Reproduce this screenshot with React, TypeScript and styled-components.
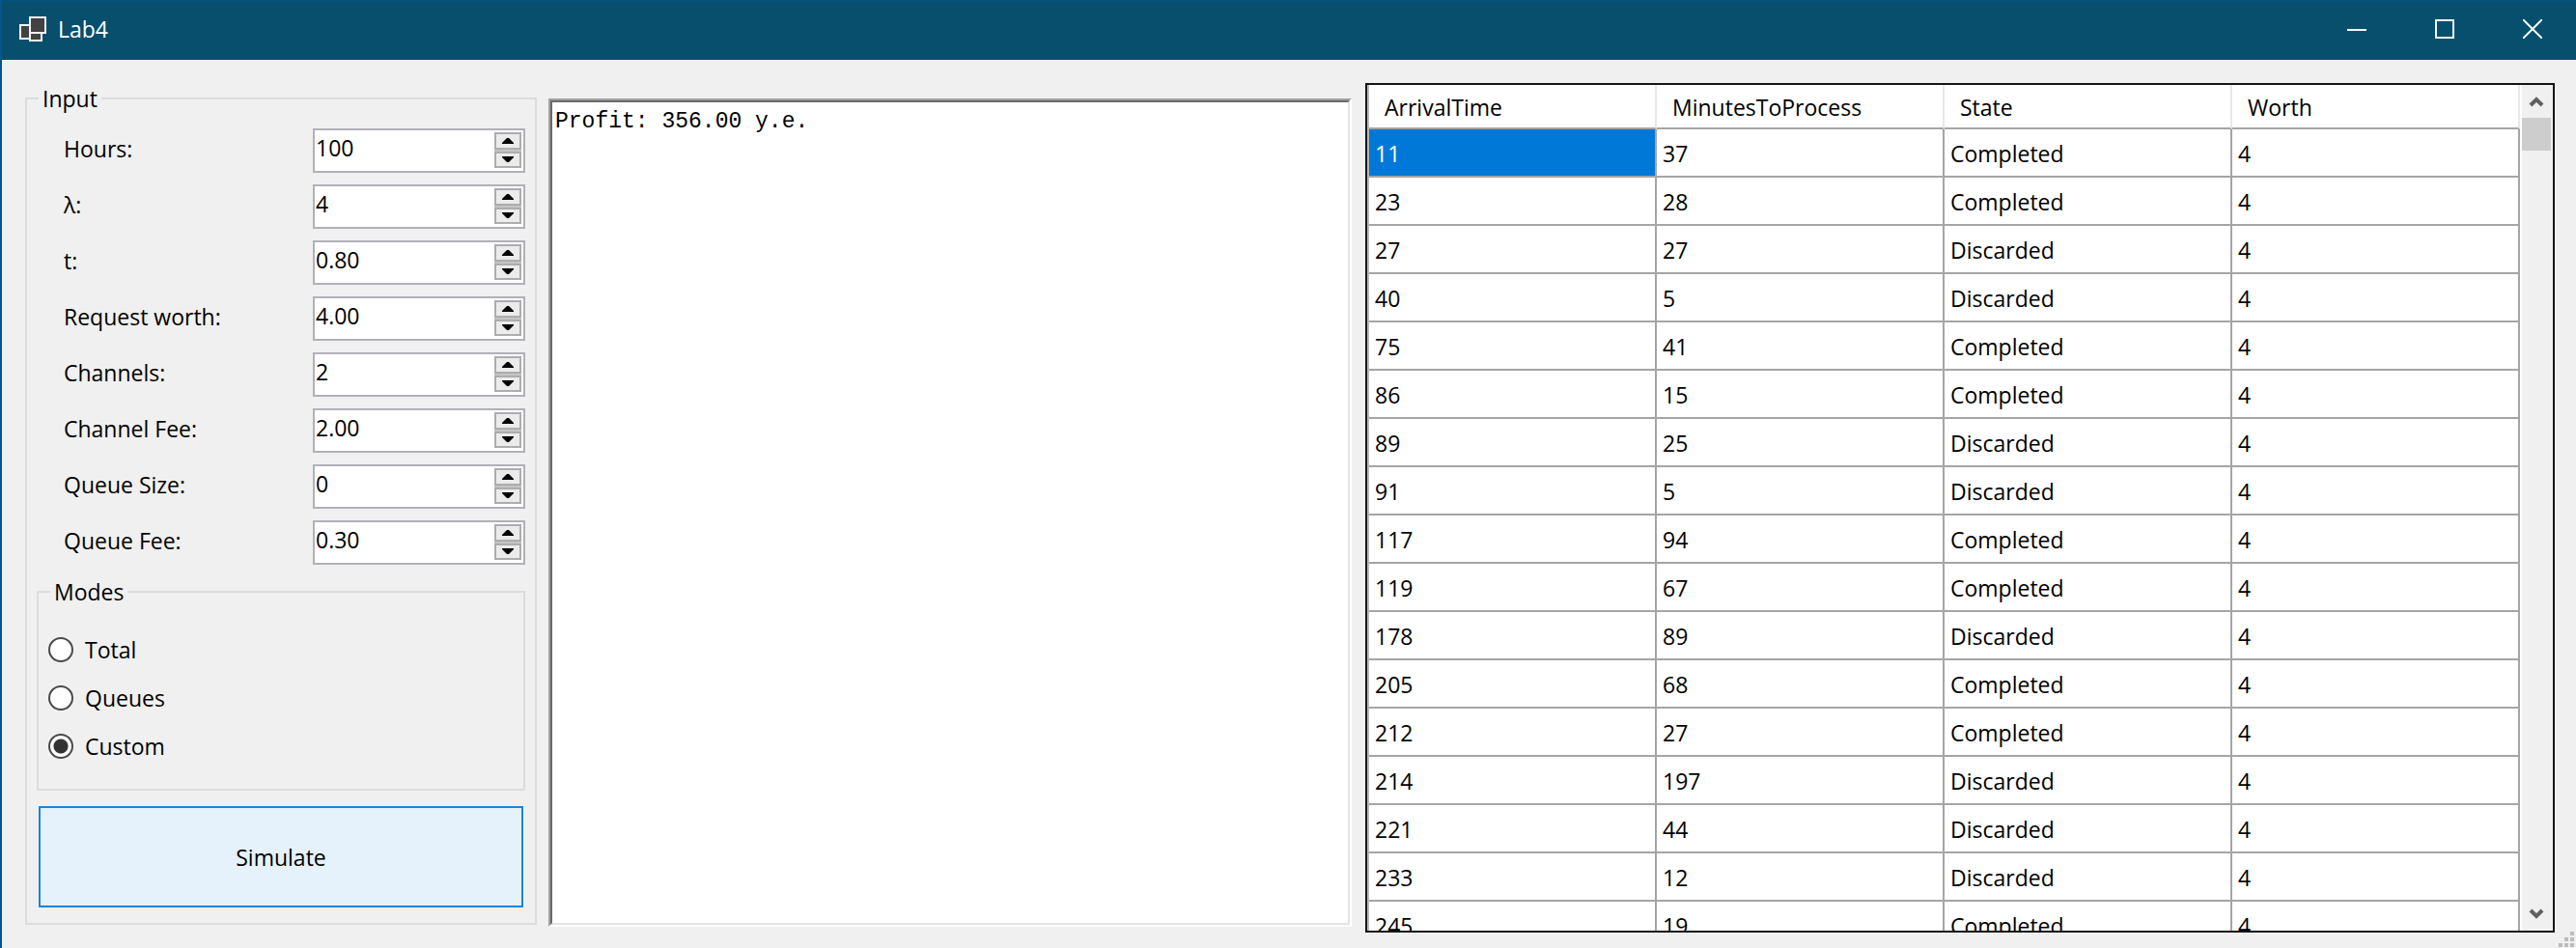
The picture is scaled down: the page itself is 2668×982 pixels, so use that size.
import React, { useState } from "react";
import styled, { createGlobalStyle } from "styled-components";

const GlobalStyle = createGlobalStyle`
  *, *::before, *::after { box-sizing: border-box; }
  html, body, #root { height: 100%; margin: 0; }
  body { background: #f0f0f0; }
  body, button, input, textarea {
    font-family: "Open Sans", "Noto Sans", sans-serif;
    font-size: 23px;
    line-height: 32px;
    color: #000;
  }
`;

const Window = styled.div`
  position: relative;
  display: flex;
  flex-direction: column;
  height: 100%;
  min-height: 720px;
  overflow: hidden;
  background: #f0f0f0;
  border-left: 2px solid #04568a;
`;

const TitleBar = styled.header`
  display: flex;
  flex: none;
  align-items: stretch;
  height: 62px;
  padding: 0 0 4px 18px;
  background: #074f6d;
  border-top: 2px solid #04517b;
  color: #fff;
`;

const AppIcon = styled.svg`
  align-self: center;
  width: 28px;
  height: 28px;
  margin-right: 12px;
`;

const Title = styled.h1`
  flex: 1;
  align-self: center;
  margin: 0;
  font-size: 23px;
  font-weight: 400;
`;

const CaptionButton = styled.button`
  display: flex;
  align-items: center;
  justify-content: center;
  width: 91px;
  padding: 0;
  border: 0;
  background: none;
  color: #f4f8fa;
`;

const Content = styled.main`
  display: grid;
  grid-template-columns: 530px minmax(0, 858fr) minmax(0, 1232fr);
  flex: 1;
  min-height: 0;
  padding: 24px 22px 16px 24px;
`;

const Group = styled.fieldset`
  display: flex;
  flex-direction: column;
  min-width: 0;
  margin: 0;
  border: 2px solid #dcdcdc;
`;

const InputGroup = styled(Group)`
  padding: 15px 10px 16px;
  margin-bottom: 8px;
`;

const ModesGroup = styled(Group)`
  gap: 18px;
  height: 222px;
  padding: 28px 10px 0;
`;

const Legend = styled.legend`
  margin-left: 2px;
  padding: 0 4px;
`;

const Fields = styled.div`
  display: flex;
  flex-direction: column;
  gap: 12px;
  margin-bottom: 12px;
`;

const Field = styled.div`
  display: grid;
  grid-template-columns: 258px minmax(0, 1fr);
  padding-left: 28px;
`;

const FieldLabel = styled.label`
  padding-top: 5px;
`;

const Spinner = styled.div`
  display: flex;
  height: 46px;
  padding: 2px 2px 2px 1px;
  background: #fff;
  border: 2px solid #b0b1b8;
`;

const SpinnerInput = styled.input`
  flex: 1;
  min-width: 0;
  height: 32px;
  padding: 0;
  border: 0;
  outline: 0;
  background: none;
`;

const SpinnerButtons = styled.div`
  display: flex;
  flex-direction: column;
  gap: 2px;
  height: 37px;
  background: #c4c4c4;
`;

const StepButton = styled.button`
  display: flex;
  align-items: center;
  justify-content: center;
  flex: 1;
  width: 28px;
  padding: 0;
  border: 2px solid #adadad;
  background: #ebebeb;
`;

const RadioLabel = styled.label`
  display: flex;
  align-items: center;
  gap: 12px;
  height: 32px;
`;

const Radio = styled.input`
  appearance: none;
  width: 26px;
  height: 26px;
  margin: 0;
  border: 2px solid #4a4a4a;
  border-radius: 50%;
  background: #fff;
  &:checked {
    background: radial-gradient(circle, #333 0 7px, #fff 8px);
  }
`;

const SimulateButton = styled.button`
  flex: 1;
  min-height: 64px;
  margin: 16px 2px 0;
  padding: 0;
  border: 2px solid #1a85db;
  background: #e5f1fb;
`;

const Output = styled.div`
  display: flex;
  margin: 16px 14px 6px 12px;
  border: 2px solid;
  border-color: #a0a0a0 #fff #fff #a0a0a0;
`;

const OutputText = styled.textarea`
  flex: 1;
  min-width: 0;
  padding: 6px 3px;
  border: 2px solid;
  border-color: #696969 #e3e3e3 #e3e3e3 #696969;
  outline: 0;
  resize: none;
  background: #fff;
  font-family: "Liberation Mono", monospace;
  line-height: 28px;
`;

const GridPanel = styled.section`
  display: flex;
  min-height: 0;
  overflow: hidden;
  background: #fff;
  border: 2px solid #151515;
`;

const TableViewport = styled.div`
  flex: 1;
  min-width: 0;
  overflow: hidden;
  padding-right: 2px;
  border-left: 2px solid #b8b8b8;
`;

const Table = styled.table`
  width: 100%;
  table-layout: fixed;
  border-collapse: separate;
  border-spacing: 0;
`;

const HeadCell = styled.th`
  height: 46px;
  padding: 2px 0 0 16px;
  border-right: 2px solid #e8e8e8;
  border-bottom: 2px solid #a5a5a5;
  font-weight: 400;
  text-align: left;
`;

const Cell = styled.td<{ $selected?: boolean }>`
  height: 50px;
  padding: 2px 0 0 6px;
  border-right: 2px solid #a5a5a5;
  border-bottom: 2px solid #a5a5a5;
  background: ${(p) => (p.$selected ? "#0078d7" : "#fff")};
  color: ${(p) => (p.$selected ? "#fff" : "#000")};
`;

const ScrollBar = styled.div`
  display: flex;
  flex-direction: column;
  width: 32px;
  padding-right: 2px;
  background: #f0f0f0;
`;

const ScrollButton = styled.button`
  display: flex;
  align-items: center;
  justify-content: center;
  height: 34px;
  padding: 0;
  border: 0;
  background: none;
`;

const ScrollTrack = styled.div`
  flex: 1;
`;

const ScrollThumb = styled.div`
  height: 34px;
  background: #cdcdcd;
`;

const ResizeGrip = styled.svg`
  position: absolute;
  right: 2px;
  bottom: 1px;
  width: 16px;
  height: 16px;
  fill: #bcbcbc;
`;

const FIELDS: [string, string][] = [
  ["Hours:", "100"],
  ["λ:", "4"],
  ["t:", "0.80"],
  ["Request worth:", "4.00"],
  ["Channels:", "2"],
  ["Channel Fee:", "2.00"],
  ["Queue Size:", "0"],
  ["Queue Fee:", "0.30"],
];

const MODES = ["Total", "Queues", "Custom"];

const COLUMNS = ["ArrivalTime", "MinutesToProcess", "State", "Worth"];

const REQUESTS: [number, number, string, number][] = [
  [11, 37, "Completed", 4],
  [23, 28, "Completed", 4],
  [27, 27, "Discarded", 4],
  [40, 5, "Discarded", 4],
  [75, 41, "Completed", 4],
  [86, 15, "Completed", 4],
  [89, 25, "Discarded", 4],
  [91, 5, "Discarded", 4],
  [117, 94, "Completed", 4],
  [119, 67, "Completed", 4],
  [178, 89, "Discarded", 4],
  [205, 68, "Completed", 4],
  [212, 27, "Completed", 4],
  [214, 197, "Discarded", 4],
  [221, 44, "Discarded", 4],
  [233, 12, "Discarded", 4],
  [245, 19, "Completed", 4],
];

function NumericField({ label, initial }: { label: string; initial: string }) {
  const [value, setValue] = useState(initial);
  const decimals = (initial.split(".")[1] || "").length;
  const step = (delta: number) =>
    setValue((v) => Math.max(0, Number(v) + delta).toFixed(decimals));
  const id = React.useId();
  return (
    <Field>
      <FieldLabel htmlFor={id}>{label}</FieldLabel>
      <Spinner>
        <SpinnerInput id={id} value={value} onChange={(e) => setValue(e.target.value)} />
        <SpinnerButtons>
          <StepButton aria-label="Increase" onClick={() => step(1)}>
            <svg width="12" height="8" viewBox="0 0 12 8"><path d="M0 7V6L5 1h2l5 5v1z" /></svg>
          </StepButton>
          <StepButton aria-label="Decrease" onClick={() => step(-1)}>
            <svg width="12" height="8" viewBox="0 0 12 8"><path d="M0 1h12v1L7 7H5L0 2z" /></svg>
          </StepButton>
        </SpinnerButtons>
      </Spinner>
    </Field>
  );
}

export default function App() {
  const [mode, setMode] = useState("Custom");
  return (
    <>
      <GlobalStyle />
      <Window>
        <TitleBar>
          <AppIcon viewBox="0 0 28 28" fill="#424242" stroke="#f4f4f4" strokeWidth="2">
            <rect x="1" y="10" width="10" height="14" />
            <rect x="11" y="18" width="12" height="8" />
            <rect x="11" y="2" width="16" height="16" />
          </AppIcon>
          <Title>Lab4</Title>
          <CaptionButton aria-label="Minimize">
            <svg width="20" height="20" viewBox="0 0 20 20"><path d="M0 11h20" stroke="currentColor" strokeWidth="2" /></svg>
          </CaptionButton>
          <CaptionButton aria-label="Maximize">
            <svg width="20" height="20" viewBox="0 0 20 20"><rect x="1" y="1" width="18" height="18" fill="none" stroke="currentColor" strokeWidth="2" /></svg>
          </CaptionButton>
          <CaptionButton aria-label="Close">
            <svg width="20" height="20" viewBox="0 0 20 20"><path d="M0 0 20 20M20 0 0 20" stroke="currentColor" strokeWidth="2" /></svg>
          </CaptionButton>
        </TitleBar>
        <Content>
          <InputGroup>
            <Legend>Input</Legend>
            <Fields>
              {FIELDS.map(([label, value]) => (
                <NumericField key={label} label={label} initial={value} />
              ))}
            </Fields>
            <ModesGroup>
              <Legend>Modes</Legend>
              {MODES.map((m) => (
                <RadioLabel key={m}>
                  <Radio type="radio" name="mode" checked={mode === m} onChange={() => setMode(m)} />
                  {m}
                </RadioLabel>
              ))}
            </ModesGroup>
            <SimulateButton>Simulate</SimulateButton>
          </InputGroup>
          <Output>
            <OutputText aria-label="Output" defaultValue="Profit: 356.00 y.e." spellCheck={false} />
          </Output>
          <GridPanel>
            <TableViewport>
              <Table>
                <thead>
                  <tr>
                    {COLUMNS.map((c) => (
                      <HeadCell key={c} scope="col">{c}</HeadCell>
                    ))}
                  </tr>
                </thead>
                <tbody>
                  {REQUESTS.map((row, r) => (
                    <tr key={r}>
                      {row.map((value, c) => (
                        <Cell key={c} $selected={r === 0 && c === 0}>{value}</Cell>
                      ))}
                    </tr>
                  ))}
                </tbody>
              </Table>
            </TableViewport>
            <ScrollBar>
              <ScrollButton aria-label="Scroll up">
                <svg width="16" height="14" viewBox="0 0 16 14"><path d="M2 11 8 5l6 6" fill="none" stroke="#606060" strokeWidth="4" /></svg>
              </ScrollButton>
              <ScrollTrack><ScrollThumb /></ScrollTrack>
              <ScrollButton aria-label="Scroll down">
                <svg width="16" height="14" viewBox="0 0 16 14"><path d="M2 3 8 9l6-6" fill="none" stroke="#606060" strokeWidth="4" /></svg>
              </ScrollButton>
            </ScrollBar>
          </GridPanel>
        </Content>
        <ResizeGrip viewBox="0 0 16 16">
          <path d="M12 0h4v4h-4zM6 6h4v4H6zM12 6h4v4h-4zM0 12h4v4H0zM6 12h4v4H6zM12 12h4v4h-4z" />
        </ResizeGrip>
      </Window>
    </>
  );
}
